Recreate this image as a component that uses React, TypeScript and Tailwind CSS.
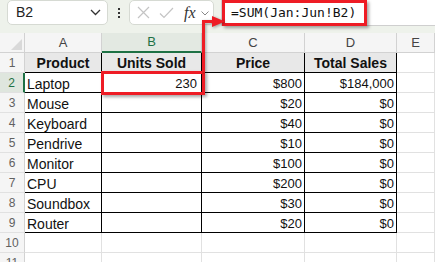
import React from 'react'

const font = { fontFamily: "'Liberation Sans', Arial, sans-serif" }

const data = [
  ['Laptop', '230', '$800', '$184,000'],
  ['Mouse', '', '$20', '$0'],
  ['Keyboard', '', '$40', '$0'],
  ['Pendrive', '', '$10', '$0'],
  ['Monitor', '', '$100', '$0'],
  ['CPU', '', '$200', '$0'],
  ['Soundbox', '', '$30', '$0'],
  ['Router', '', '$20', '$0'],
]

const cols = ['A', 'B', 'C', 'D', 'E']

function RowNum({ n, active }: { n: number; active?: boolean }) {
  return (
    <div
      className={
        'h-[20px] flex items-center justify-center text-[12px] border-b border-[#e1e1e1] pt-[1px] ' +
        (active
          ? 'bg-[#dfe6de] text-[#1e7145] border-r-2 border-r-[#1e7145]'
          : 'bg-[#f5f5f5] text-[#616161] border-r border-r-[#d2d2d2]')
      }
    >
      {n}
    </div>
  )
}

export default function App() {
  return (
    <div className="relative w-[435px] h-[262px] overflow-hidden bg-white text-[#111]" style={font}>
      {/* top bar */}
      <div className="h-[33px] flex items-start bg-[#eef2eb] pl-[7px]">
        <div className="w-[101px] h-[25px] bg-white border border-[#d6dad3] rounded-[5px] flex items-center justify-between pl-[8px] pr-[6px]">
          <span className="text-[14px] text-[#222]">B2</span>
          <svg width="11" height="7" viewBox="0 0 11 7">
            <path d="M1 1 L5.5 5.5 L10 1" fill="none" stroke="#333" strokeWidth="1.3" />
          </svg>
        </div>
        <div className="w-[21px] h-[25px] flex flex-col items-center justify-center gap-[2px]">
          <span className="w-[2px] h-[2px] bg-[#333]" />
          <span className="w-[2px] h-[2px] bg-[#333]" />
          <span className="w-[2px] h-[2px] bg-[#333]" />
        </div>
        <div className="w-[85px] h-[25px] bg-white border border-[#d6dad3] rounded-[5px] flex items-center pl-[6px]">
          <svg width="13" height="13" viewBox="0 0 13 13" className="ml-[1px]">
            <path d="M1 1 L12 12 M12 1 L1 12" stroke="#c4c4c4" strokeWidth="1.2" />
          </svg>
          <svg width="15" height="12" viewBox="0 0 15 12" className="ml-[9px]">
            <path d="M1 6.5 L5 10.5 L14 1" fill="none" stroke="#c4c4c4" strokeWidth="1.2" />
          </svg>
          <span
            className="ml-[10px] text-[16px] italic text-[#333] leading-none"
            style={{ fontFamily: "'Liberation Serif', 'Times New Roman', serif" }}
          >
            fx
          </span>
          <svg width="8" height="5" viewBox="0 0 8 5" className="ml-[5px] mt-[2px]">
            <path d="M0.5 0.5 L4 4 L7.5 0.5" fill="none" stroke="#888" strokeWidth="1" />
          </svg>
        </div>
        <div className="ml-[7px] -mt-px w-[214px] h-[27px] bg-white border-l border-b border-[#cfcfcf] flex items-center pl-[9px]">
          <span
            className="text-[13px] text-[#111] pt-[2px]"
            style={{ fontFamily: "'DejaVu Sans Mono', 'Liberation Mono', monospace" }}
          >
            =SUM(Jan:Jun!B2)
          </span>
        </div>
      </div>

      {/* sheet */}
      <div className="grid grid-cols-[25px_77px_100px_103px_92px_38px]">
        {/* header row */}
        <div className="h-[20px] bg-[#f5f5f5] border-r border-b border-[#d2d2d2] flex items-end justify-end p-[2px]">
          <svg width="11" height="11" viewBox="0 0 11 11">
            <path d="M11 0 L11 11 L0 11 Z" fill="#d9d9d9" />
          </svg>
        </div>
        {cols.map(c =>
          c === 'B' ? (
            <div
              key={c}
              className="h-[20px] flex items-center justify-center text-[13px] bg-[#e3e9e2] text-[#1e7145] border-r border-r-[#d2d2d2] border-b-2 border-b-[#1e7145]"
            >
              {c}
            </div>
          ) : (
            <div
              key={c}
              className="h-[20px] flex items-center justify-center text-[13px] bg-[#f5f5f5] text-[#444] border-r border-b border-[#d2d2d2]"
            >
              {c}
            </div>
          )
        )}

        {/* row 1 */}
        <RowNum n={1} />
        {['Product', 'Units Sold', 'Price', 'Total Sales'].map(h => (
          <div
            key={h}
            className="h-[20px] bg-[#e8e8e8] border-r border-b border-black flex items-center justify-center font-bold text-[14px] pt-[2px]"
          >
            {h}
          </div>
        ))}
        <div className="h-[20px] border-r border-b border-[#e1e1e1]" />

        {/* data rows */}
        {data.map((r, i) => (
          <React.Fragment key={r[0]}>
            <RowNum n={i + 2} active={i === 0} />
            <div className="h-[20px] border-r border-b border-black text-[14px] leading-[18px] pt-[2px] pl-[2px]">
              {r[0]}
            </div>
            <div className="h-[20px] border-r border-b border-black text-[13px] leading-[18px] pt-[2px] pr-[4px] text-right">
              {r[1]}
            </div>
            <div className="h-[20px] border-r border-b border-black text-[13px] leading-[18px] pt-[2px] pr-[2px] text-right">
              {r[2]}
            </div>
            <div className="h-[20px] border-r border-b border-black text-[13px] leading-[18px] pt-[2px] pr-[2px] text-right">
              {r[3]}
            </div>
            <div className="h-[20px] border-r border-b border-[#e1e1e1]" />
          </React.Fragment>
        ))}

        {/* empty rows */}
        {[10, 11].map(n => (
          <React.Fragment key={n}>
            <RowNum n={n} />
            <div className="h-[20px] border-r border-b border-[#e1e1e1]" />
            <div className="h-[20px] border-r border-b border-[#e1e1e1]" />
            <div className="h-[20px] border-r border-b border-[#e1e1e1]" />
            <div className="h-[20px] border-r border-b border-[#e1e1e1]" />
            <div className="h-[20px] border-r border-b border-[#e1e1e1]" />
          </React.Fragment>
        ))}
      </div>

      {/* annotations */}
      <div className="absolute left-[222px] top-0 w-[145px] h-[26px] border-[3px] border-[#ee1c25] shadow-[2px_2px_3px_rgba(0,0,0,0.35)]" />
      <div className="absolute left-[101px] top-[71px] w-[104px] h-[24px] border-[3px] border-[#ee1c25] shadow-[2px_2px_3px_rgba(0,0,0,0.35)]" />
      <svg
        className="absolute left-0 top-0 pointer-events-none"
        width="435"
        height="262"
        style={{ filter: 'drop-shadow(1.5px 1.5px 1.5px rgba(0,0,0,0.35))' }}
      >
        <path d="M203.5 72 L203.5 21.5 L214 21.5" fill="none" stroke="#ee1c25" strokeWidth="3" />
        <path d="M212 16 L225 21.5 L212 27 Z" fill="#ee1c25" />
      </svg>
    </div>
  )
}
